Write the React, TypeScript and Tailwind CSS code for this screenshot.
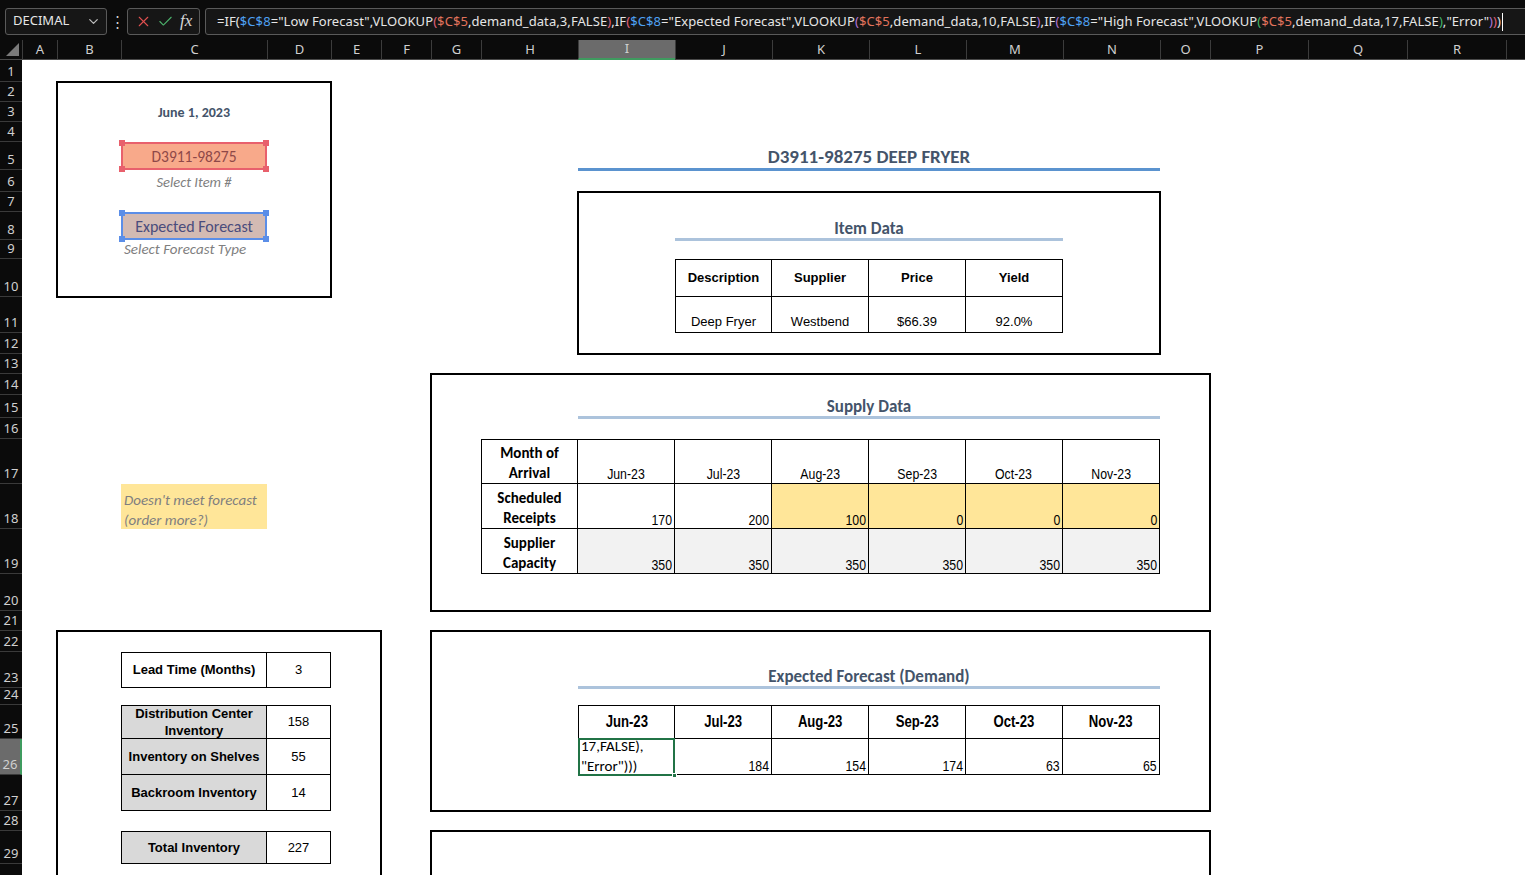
import { Check, ChevronDown, X } from "lucide-react";

const cols = ["A", "B", "C", "D", "E", "F", "G", "H", "I", "J", "K", "L", "M", "N", "O", "P", "Q", "R", ""];
const rows = Array.from({ length: 30 }, (_, i) => i + 1);
const months = ["Jun-23", "Jul-23", "Aug-23", "Sep-23", "Oct-23", "Nov-23"];
const receipts = [170, 200, 100, 0, 0, 0];
const demand = [184, 154, 174, 63, 65];

const arial = "font-['Liberation_Sans',Arial,sans-serif]";
const calibri = "font-['Carlito','Lato',sans-serif]";
// no Arial Narrow here, so squeeze Liberation Sans instead
const squeeze = "inline-block scale-x-[0.82]";

const W = "text-[#e6e6e6]";
const BLUE = "text-[#4ea1f3]";
const RED = "text-[#e2735c]";
const P2 = "text-[#e0607a]";
const P3 = "text-[#b174d8]";
const P4 = "text-[#41b565]";

const formula: [string, string][] = [
  ["=IF(", W], ["$C$8", BLUE], ['="Low Forecast",VLOOKUP', W], ["(", P2], ["$C$5", RED],
  [",demand_data,3,FALSE", W], [")", P2], [",IF", W], ["(", P2], ["$C$8", BLUE],
  ['="Expected Forecast",VLOOKUP', W], ["(", P3], ["$C$5", RED], [",demand_data,10,FALSE", W],
  [")", P3], [",IF", W], ["(", P3], ["$C$8", BLUE], ['="High Forecast",VLOOKUP', W],
  ["(", P4], ["$C$5", RED], [",demand_data,17,FALSE", W], [")", P4], [',"Error"', W],
  [")", P3], [")", P2], [")", W],
];

function TopBar() {
  return (
    <div className="h-10 shrink-0 flex items-center pl-[5px] pt-[2px] font-['Noto_Sans',sans-serif] text-[13px]">
      <div className="w-[102px] h-[27px] flex items-center justify-between pl-[7px] pr-[5px] rounded-[3px] border border-[#5a5a5a] bg-[#161616] text-[#e6e6e6]">
        <span>DECIMAL</span>
        <ChevronDown size={15} className="text-[#bdbdbd]" />
      </div>
      <div className="w-[20px] text-center text-[#cfcfcf] text-[15px] leading-none">⋮</div>
      <div className="w-[73px] h-[27px] flex items-center justify-around px-[4px] rounded-[3px] border border-[#5a5a5a] bg-[#161616]">
        <X size={17} strokeWidth={1.5} className="text-[#e05050]" />
        <Check size={17} strokeWidth={1.5} className="text-[#4cb26c]" />
        <span className="font-['Liberation_Serif',serif] italic text-[17px] text-[#d8d8d8]">fx</span>
      </div>
      <div className="flex-1 -mr-2 ml-[5px] h-[27px] flex items-center pl-[11px] pt-px rounded-[3px] border border-[#5a5a5a] bg-[#161616] whitespace-nowrap overflow-hidden tracking-[0.08px]">
        {formula.map(([t, c], i) => (
          <span key={i} className={c}>{t}</span>
        ))}
        <span className="ml-px w-px h-[18px] bg-white" />
      </div>
    </div>
  );
}

function Handles({ color }: { color: string }) {
  return (
    <>
      <span className={`absolute -left-[4px] -top-[4px] w-[6px] h-[6px] ${color}`} />
      <span className={`absolute -right-[4px] -top-[4px] w-[6px] h-[6px] ${color}`} />
      <span className={`absolute -left-[4px] -bottom-[4px] w-[6px] h-[6px] ${color}`} />
      <span className={`absolute -right-[4px] -bottom-[4px] w-[6px] h-[6px] ${color}`} />
    </>
  );
}

export default function App() {
  return (
    <div className="w-[1525px] h-[875px] overflow-hidden bg-[#0b0b0b] flex flex-col">
      <TopBar />
      <div className="flex-1 min-h-0 grid grid-cols-[22px_35px_64px_146px_64px_50px_50px_50px_97px_97px_97px_97px_97px_97px_97px_50px_98px_99px_99px_1fr] grid-rows-[20px_22px_20px_20px_20px_28px_22px_20px_28px_19px_38px_36px_21px_20px_21px_23px_21px_45px_45px_45px_37px_20px_21px_36px_17px_34px_36px_36px_20px_33px_20px]">
        {/* sheet background */}
        <div className="col-start-2 col-span-19 row-start-2 row-span-30 bg-white" />

        {/* column headers */}
        <div className="relative border-b border-[#4a4a4a]">
          <span className="absolute right-[3px] bottom-[3px] w-0 h-0 border-l-[13px] border-l-transparent border-b-[13px] border-b-[#7a7a7a]" />
        </div>
        {cols.map((c) => (
          <div
            key={c || "end"}
            className={`flex items-center justify-center border-l border-[#3c3c3c] font-['Noto_Sans',sans-serif] text-[13px] text-[#d0d0d0] ${
              c === "I" ? "bg-[#6b6b6b] border-b-2 border-b-[#3f9b5f]" : "border-b border-b-[#4a4a4a]"
            }`}
          >
            {c}
          </div>
        ))}

        {/* row headers */}
        {rows.map((r) => (
          <div
            key={r}
            className={`col-start-1 flex items-end justify-center pb-px border-b border-[#3a3a3a] font-['Noto_Sans',sans-serif] text-[13px] leading-[18px] text-[#d0d0d0] ${
              r === 26 ? "bg-[#6b6b6b] border-r-2 border-r-[#3f9b5f]" : ""
            }`}
          >
            {r < 30 ? r : ""}
          </div>
        ))}

        {/* selector panel */}
        <div className="col-start-3 col-span-3 row-start-3 row-span-9 -m-px border-2 border-black" />
        <div className={`col-start-4 row-start-4 flex items-center justify-center ${calibri} font-bold text-[14px] text-[#44546a]`}>
          June 1, 2023
        </div>
        <div className={`col-start-4 row-start-6 relative flex items-center justify-center pt-[2px] border-2 border-[#e8606c] bg-[#f8a98a] ${calibri} text-[15.5px] text-[#8e4848]`}>
          D3911-98275
          <Handles color="bg-[#e8606c]" />
        </div>
        <div className={`col-start-4 row-start-7 flex items-center justify-center pt-[3px] ${calibri} italic text-[14.5px] text-[#7f7f7f]`}>
          Select Item #
        </div>
        <div className={`col-start-4 row-start-9 relative flex items-center justify-center pt-[2px] border-2 border-[#5b8ee8] bg-[#d3bab3] ${calibri} text-[16px] text-[#4a4c7c]`}>
          Expected Forecast
          <Handles color="bg-[#5b8ee8]" />
        </div>
        <div className={`col-start-4 row-start-10 flex items-center pl-[3px] whitespace-nowrap ${calibri} italic text-[15px] text-[#7f7f7f]`}>
          Select Forecast Type
        </div>

        {/* title */}
        <div className={`col-start-10 col-span-6 row-start-6 -mb-px flex items-end justify-center border-b-[3px] border-[#5b93cf] ${calibri} font-bold text-[19px] leading-[22px] text-[#44546a]`}>
          D3911-98275 DEEP FRYER
        </div>

        {/* item data */}
        <div className="col-start-10 col-span-6 row-start-8 row-span-6 -m-px border-2 border-black" />
        <div className={`col-start-11 col-span-4 row-start-9 -mb-px flex items-end justify-center border-b-[3px] border-[#acc3dc] ${calibri} font-bold text-[17px] leading-[19px] text-[#44546a]`}>
          Item Data
        </div>
        <div className={`col-start-11 col-span-4 row-start-11 row-span-2 grid grid-cols-subgrid grid-rows-subgrid border-l border-t border-black ${arial} text-[13px] text-black`}>
          {["Description", "Supplier", "Price", "Yield"].map((h) => (
            <div key={h} className="flex items-center justify-center border-r border-b border-black font-bold">
              {h}
            </div>
          ))}
          {["Deep Fryer", "Westbend", "$66.39", "92.0%"].map((v) => (
            <div key={v} className="flex items-end justify-center pb-px border-r border-b border-black">
              {v}
            </div>
          ))}
        </div>

        {/* supply data */}
        <div className="col-start-8 col-span-9 row-start-15 row-span-7 -m-px border-2 border-black" />
        <div className={`col-start-10 col-span-6 row-start-16 -mb-px flex items-end justify-center border-b-[3px] border-[#acc3dc] ${calibri} font-bold text-[17px] leading-[19px] text-[#44546a]`}>
          Supply Data
        </div>
        <div className={`col-start-9 col-span-7 row-start-18 row-span-3 grid grid-cols-subgrid grid-rows-subgrid border-l border-t border-black ${arial} text-[15px] leading-[16px] text-black`}>
          <div className={`flex items-end justify-center text-center leading-[20px] border-r border-b border-black font-bold ${calibri}`}>
            Month of<br />Arrival
          </div>
          {months.map((m) => (
            <div key={m} className="flex items-end justify-center pb-px border-r border-b border-black">
              <span className={`${squeeze} origin-bottom`}>{m}</span>
            </div>
          ))}
          <div className={`flex items-end justify-center text-center leading-[20px] border-r border-b border-black font-bold ${calibri}`}>
            Scheduled<br />Receipts
          </div>
          {receipts.map((v, i) => (
            <div
              key={i}
              className={`flex items-end justify-end pr-[2px] border-r border-b border-black ${i >= 2 ? "bg-[#ffe699]" : ""}`}
            >
              <span className={`${squeeze} origin-right`}>{v}</span>
            </div>
          ))}
          <div className={`flex items-end justify-center text-center leading-[20px] border-r border-b border-black font-bold ${calibri}`}>
            Supplier<br />Capacity
          </div>
          {months.map((m) => (
            <div key={m} className="flex items-end justify-end pr-[2px] border-r border-b border-black bg-[#f2f2f2]">
              <span className={`${squeeze} origin-right`}>350</span>
            </div>
          ))}
        </div>

        {/* note */}
        <div className={`col-start-4 row-start-19 flex flex-col justify-end pl-[3px] bg-[#ffe699] ${calibri} italic text-[15px] leading-[20px] text-[#7f7f7f] whitespace-nowrap`}>
          <div className="flex flex-col translate-y-px">
            <span>Doesn't meet forecast</span>
            <span>(order more?)</span>
          </div>
        </div>

        {/* inventory panel */}
        <div className="col-start-3 col-span-4 row-start-23 row-span-9 -m-px border-2 border-black" />
        <div className={`col-start-4 col-span-2 row-start-24 grid grid-cols-subgrid border border-black ${arial} text-[13px] text-black`}>
          <div className="flex items-center justify-center border-r border-black font-bold">Lead Time (Months)</div>
          <div className="flex items-center justify-center">3</div>
        </div>
        <div className={`col-start-4 col-span-2 row-start-26 row-span-3 grid grid-cols-subgrid grid-rows-subgrid border-l border-t border-black ${arial} text-[13px] text-black`}>
          <div className="flex items-center justify-center text-center leading-[17px] border-r border-b border-black bg-[#d9d9d9] font-bold">
            Distribution Center<br />Inventory
          </div>
          <div className="flex items-center justify-center border-r border-b border-black">158</div>
          <div className="flex items-center justify-center border-r border-b border-black bg-[#d9d9d9] font-bold whitespace-nowrap">
            Inventory on Shelves
          </div>
          <div className="flex items-center justify-center border-r border-b border-black">55</div>
          <div className="flex items-center justify-center border-r border-b border-black bg-[#d9d9d9] font-bold">
            Backroom Inventory
          </div>
          <div className="flex items-center justify-center border-r border-b border-black">14</div>
        </div>
        <div className={`col-start-4 col-span-2 row-start-30 grid grid-cols-subgrid border border-black ${arial} text-[13px] text-black`}>
          <div className="flex items-center justify-center border-r border-black bg-[#d9d9d9] font-bold">Total Inventory</div>
          <div className="flex items-center justify-center">227</div>
        </div>

        {/* forecast */}
        <div className="col-start-8 col-span-9 row-start-23 row-span-6 -m-px border-2 border-black" />
        <div className={`col-start-10 col-span-6 row-start-24 -mb-px flex items-end justify-center border-b-[3px] border-[#acc3dc] ${calibri} font-bold text-[17px] leading-[19px] text-[#44546a]`}>
          Expected Forecast (Demand)
        </div>
        <div className={`col-start-10 col-span-6 row-start-26 row-span-2 grid grid-cols-subgrid grid-rows-subgrid border-l border-t border-black ${arial} text-[15px] leading-[16px] text-black`}>
          {months.map((m) => (
            <div key={m} className="flex items-center justify-center border-r border-b border-black font-bold text-[16px]">
              <span className={squeeze}>{m}</span>
            </div>
          ))}
          <div className={`relative flex flex-col justify-end pl-[2px] border-r border-b border-black ${calibri} text-[15px] leading-[20px]`}>
            <div className="flex flex-col translate-y-[2px]">
              <span>17,FALSE),</span>
              <span>"Error")))</span>
            </div>
            <span className="absolute -left-px -top-px -right-px -bottom-[2px] border-2 border-[#217346]" />
            <span className="absolute -right-[3px] -bottom-[4px] w-[5px] h-[5px] bg-[#217346] border border-white" />
          </div>
          {demand.map((v) => (
            <div key={v} className="flex items-end justify-end pr-[2px] border-r border-b border-black">
              <span className={`${squeeze} origin-right`}>{v}</span>
            </div>
          ))}
        </div>

        {/* next panel */}
        <div className="col-start-8 col-span-9 row-start-30 row-span-2 -m-px border-2 border-black" />
      </div>
    </div>
  );
}
